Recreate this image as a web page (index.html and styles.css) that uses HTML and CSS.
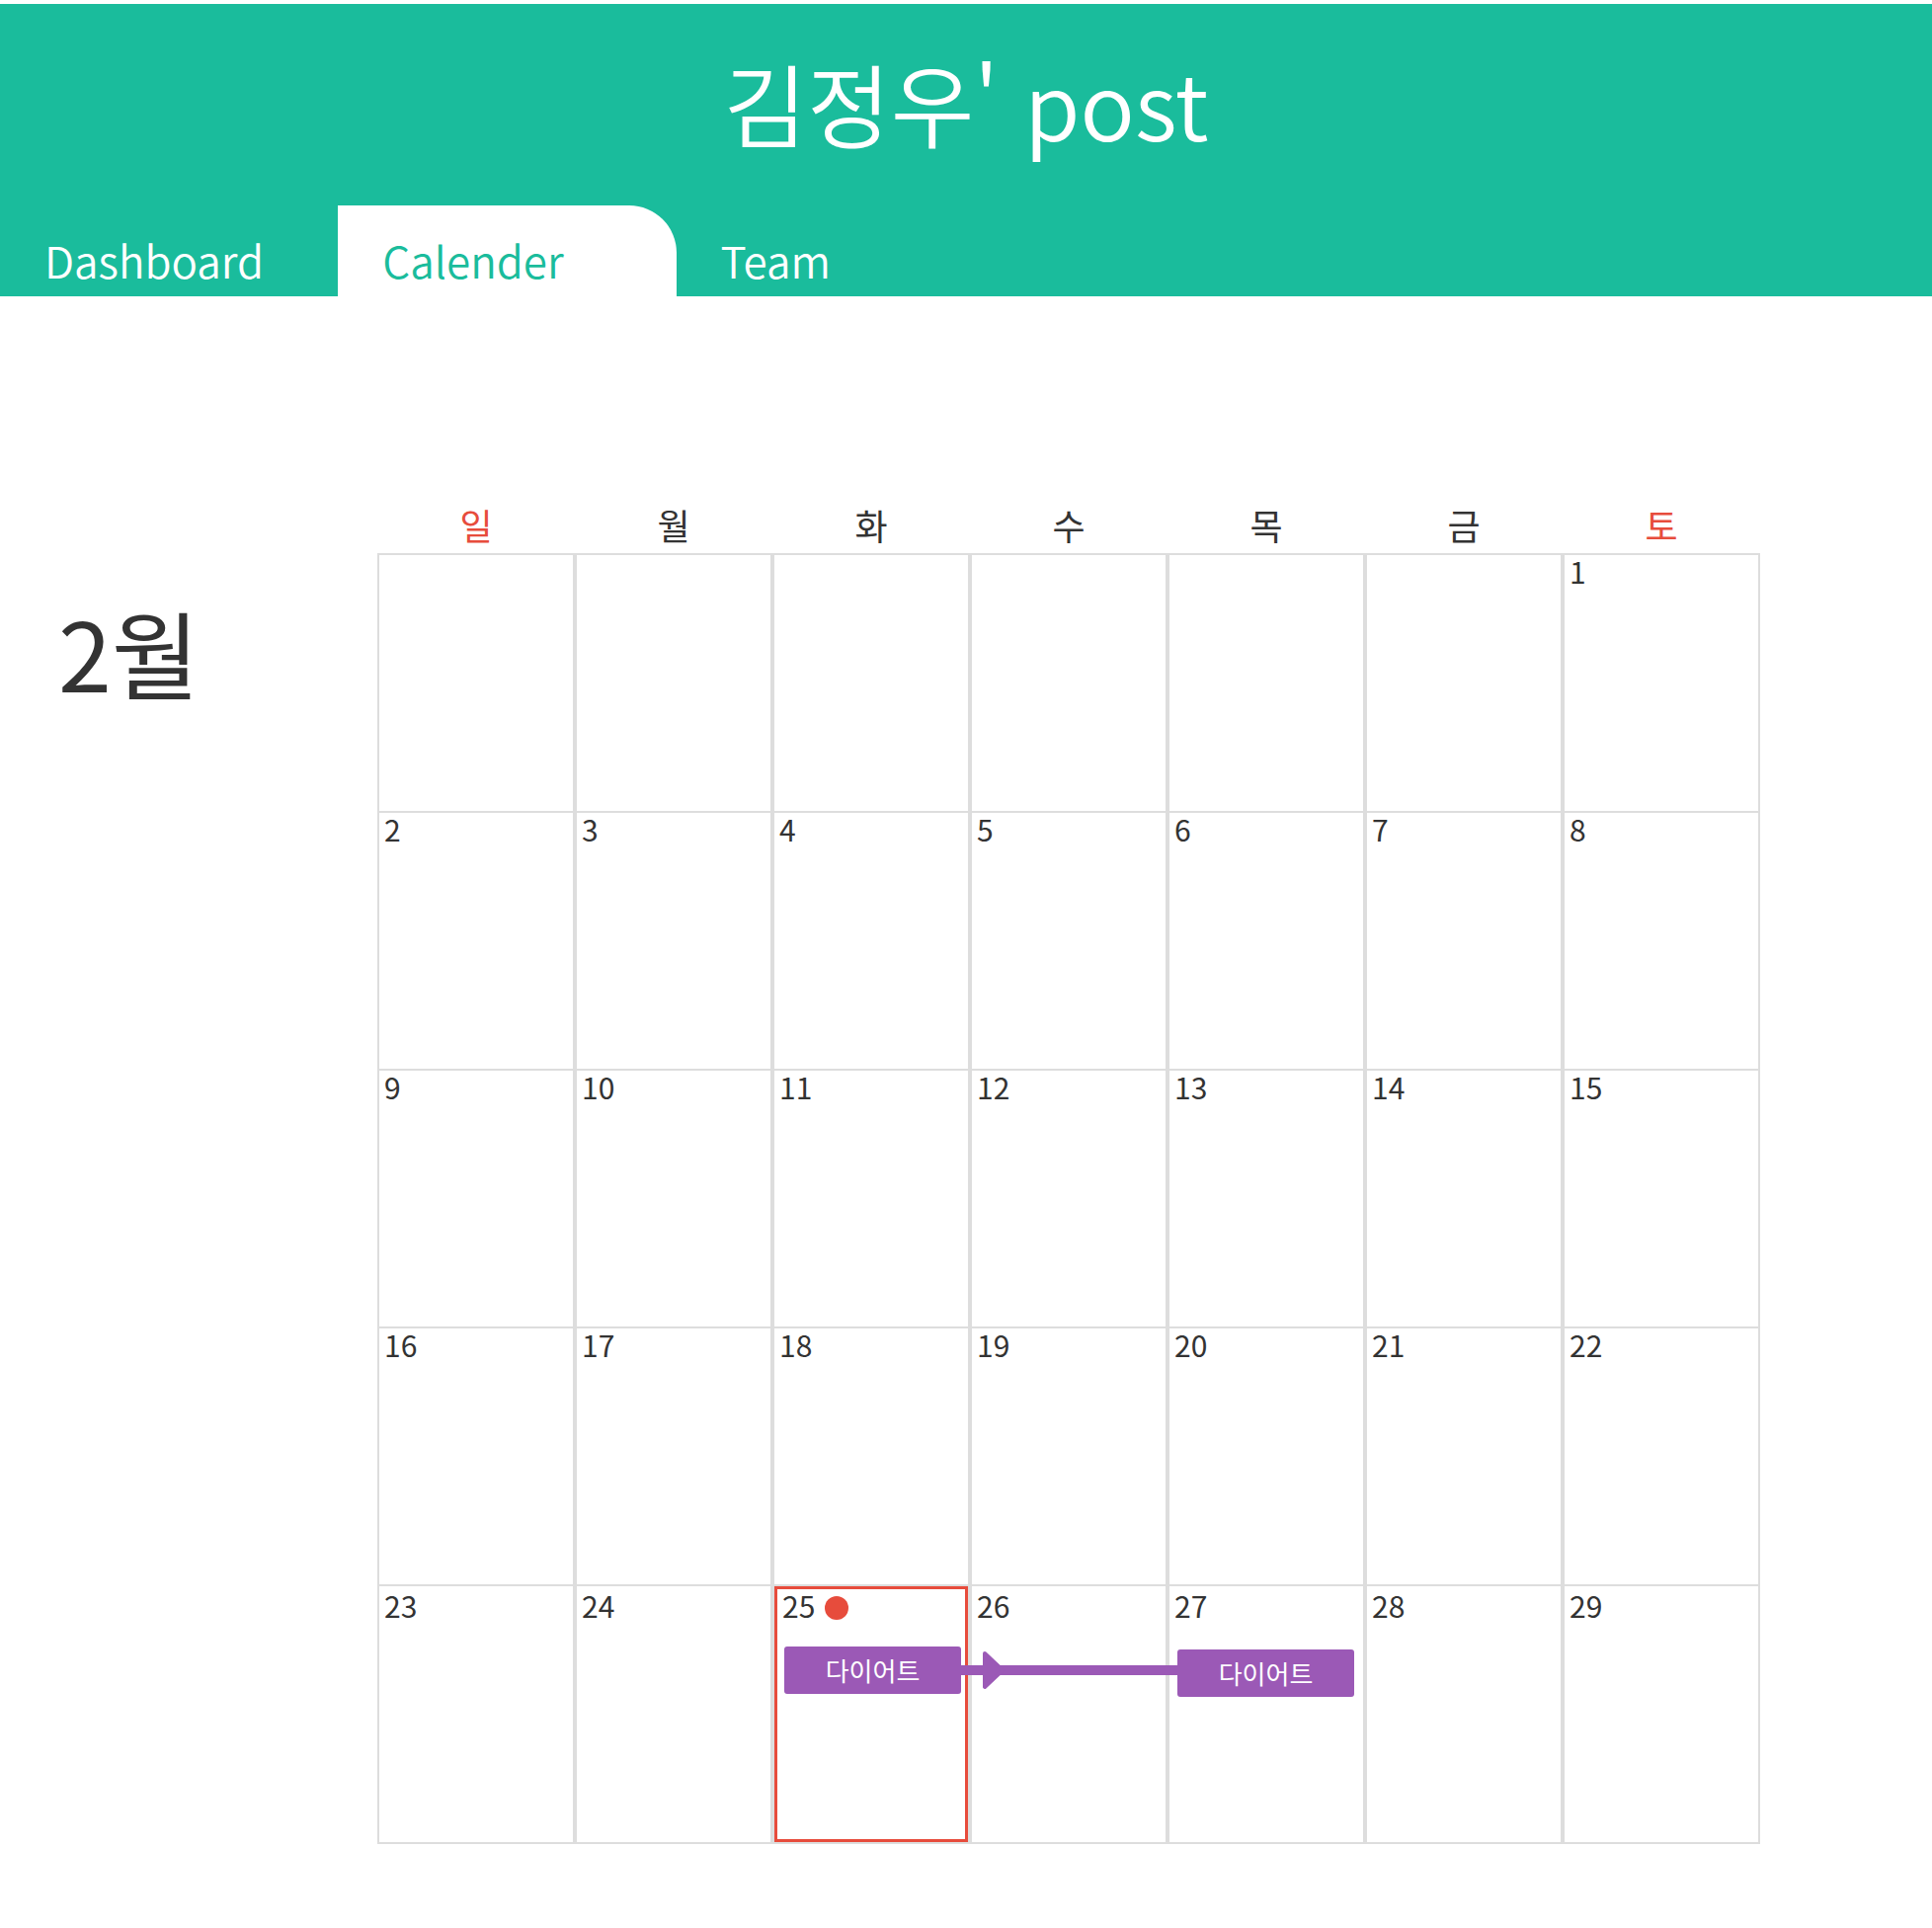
FILE: index.html
```html
<!DOCTYPE html>
<html lang="ko">
<head>
<meta charset="utf-8">
<title>김정우' post</title>
<link rel="stylesheet" href="styles.css">
</head>
<body>
<header class="header">
  <h1 class="title">김정우' post</h1>
  <nav class="tabs">
    <div class="tab">Dashboard</div>
    <div class="tab tab-active">Calender</div>
    <div class="tab">Team</div>
  </nav>
</header>
<main class="main">
  <aside class="aside">
    <div class="month">2월</div>
  </aside>
  <section class="calendar">
    <div class="weekdays">
      <div class="wd wd-red">일</div>
      <div class="wd">월</div>
      <div class="wd">화</div>
      <div class="wd">수</div>
      <div class="wd">목</div>
      <div class="wd">금</div>
      <div class="wd wd-red">토</div>
    </div>
    <div class="days">
      <div class="cell"></div>
      <div class="cell"></div>
      <div class="cell"></div>
      <div class="cell"></div>
      <div class="cell"></div>
      <div class="cell"></div>
      <div class="cell"><div class="num">1</div></div>

      <div class="cell"><div class="num">2</div></div>
      <div class="cell"><div class="num">3</div></div>
      <div class="cell"><div class="num">4</div></div>
      <div class="cell"><div class="num">5</div></div>
      <div class="cell"><div class="num">6</div></div>
      <div class="cell"><div class="num">7</div></div>
      <div class="cell"><div class="num">8</div></div>

      <div class="cell"><div class="num">9</div></div>
      <div class="cell"><div class="num">10</div></div>
      <div class="cell"><div class="num">11</div></div>
      <div class="cell"><div class="num">12</div></div>
      <div class="cell"><div class="num">13</div></div>
      <div class="cell"><div class="num">14</div></div>
      <div class="cell"><div class="num">15</div></div>

      <div class="cell"><div class="num">16</div></div>
      <div class="cell"><div class="num">17</div></div>
      <div class="cell"><div class="num">18</div></div>
      <div class="cell"><div class="num">19</div></div>
      <div class="cell"><div class="num">20</div></div>
      <div class="cell"><div class="num">21</div></div>
      <div class="cell"><div class="num">22</div></div>

      <div class="cell cell-last"><div class="num">23</div></div>
      <div class="cell cell-last"><div class="num">24</div></div>
      <div class="cell cell-last cell-today"><div class="num">25<span class="dot"></span></div><div class="event">다이어트</div></div>
      <div class="cell cell-last"><div class="num">26</div></div>
      <div class="cell cell-last"><div class="num">27</div><div class="event event-end">다이어트</div></div>
      <div class="cell cell-last"><div class="num">28</div></div>
      <div class="cell cell-last"><div class="num">29</div></div>

      <svg class="connector" width="224" height="48" viewBox="0 0 224 48" aria-hidden="true">
        <rect x="0" y="18" width="224" height="10" fill="#9b59b6"/>
        <polygon points="27,6 45,23 27,40" fill="#9b59b6" stroke="#9b59b6" stroke-width="4" stroke-linejoin="round"/>
      </svg>
    </div>
  </section>
</main>
</body>
</html>
```

FILE: styles.css
```css
* {
  box-sizing: border-box;
}

body {
  margin: 0;
  background: #ffffff;
  color: #333333;
  font-family: "Noto Sans CJK KR", "Noto Sans", sans-serif;
}

.header {
  margin-top: 4px;
  height: 296px;
  background: #1abc9c;
  display: flex;
  flex-direction: column;
}

.title {
  flex: 1;
  margin: 0;
  padding-top: 53px;
  text-align: center;
  color: #ffffff;
  font-size: 92px;
  font-weight: 350;
  line-height: 1;
}

.tabs {
  display: flex;
  height: 92px;
}

.tab {
  width: 17.5%;
  padding: 0 0 15px 45px;
  display: flex;
  align-items: flex-end;
  color: #ffffff;
  font-size: 44px;
  font-weight: 350;
  line-height: 1;
}

.tab-active {
  background: #ffffff;
  color: #1abc9c;
  border-top-right-radius: 48px;
}

.main {
  display: flex;
  padding-top: 205px;
}

.aside {
  flex: 0 0 382px;
  padding: 105px 0 0 59px;
}

.month {
  font-size: 97px;
  line-height: 1;
  color: #333333;
}

.calendar {
  flex: 0 0 1400px;
}

.weekdays {
  display: grid;
  grid-template-columns: repeat(7, 200px);
  padding-bottom: 3px;
}

.wd {
  text-align: center;
  font-size: 36px;
  line-height: 52px;
  color: #333333;
}

.wd-red {
  color: #e74c3c;
}

.days {
  position: relative;
  display: grid;
  grid-template-columns: repeat(7, 200px);
  grid-auto-rows: 261px;
  border-top: 2px solid #dddddd;
}

.cell {
  position: relative;
  border: 2px solid #dddddd;
  border-top: none;
  padding: 1px 0 0 5px;
}

.cell-last {
  padding-top: 4px;
}

.cell-today {
  padding-left: 8px;
}

.cell-today::after {
  content: "";
  position: absolute;
  inset: 0;
  border: 3px solid #e74c3c;
}

.num {
  display: flex;
  align-items: flex-start;
  font-size: 30px;
  line-height: 30px;
  color: #333333;
}

.dot {
  width: 24px;
  height: 24px;
  margin: 6px 0 0 10px;
  border-radius: 50%;
  background: #e74c3c;
}

.event {
  width: 179px;
  height: 48px;
  margin: 27px 0 0 2px;
  border-radius: 3px;
  background: #9b59b6;
  color: #ffffff;
  font-size: 26px;
  line-height: 48px;
  text-align: center;
}

.event-end {
  margin: 30px 0 0 3px;
}

.connector {
  position: absolute;
  left: 588px;
  top: 1106px;
}
```
